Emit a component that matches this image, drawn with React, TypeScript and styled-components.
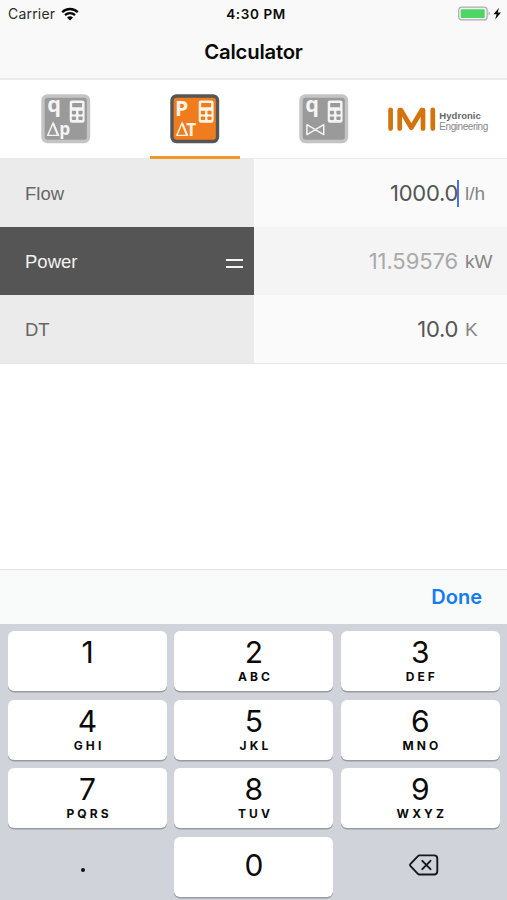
import React from "react";
import styled, { createGlobalStyle } from "styled-components";

const GlobalStyle = createGlobalStyle`
  * { box-sizing: border-box; }
  body { margin: 0; background: #fff; }
`;

const Screen = styled.div`
  width: 507px;
  height: 900px;
  display: flex;
  flex-direction: column;
  overflow: hidden;
  background: #fff;
  font-family: Inter, "Liberation Sans", sans-serif;
  color: #0a0a0a;
`;

const Header = styled.header`
  height: 80px;
  background: #f9f9f9;
  border-bottom: 2px solid #ebebeb;
`;

const StatusBar = styled.div`
  height: 27px;
  display: grid;
  grid-template-columns: 1fr auto 1fr;
  align-items: center;
  padding: 0 5px 0 8px;
`;

const Carrier = styled.span`
  display: flex;
  align-items: center;
  gap: 6px;
  font-size: 14px;
  letter-spacing: 0.2px;
  color: #2b2b2b;
`;

const Clock = styled.span`
  font-size: 13.5px;
  font-weight: 600;
  letter-spacing: 0.6px;
  padding-left: 2px;
`;

const Battery = styled.span`
  display: flex;
  justify-content: flex-end;
  align-items: center;
`;

const Title = styled.h1`
  margin: 0;
  height: 50px;
  line-height: 50px;
  text-align: center;
  font-size: 20.3px;
  font-weight: 600;
  letter-spacing: -0.2px;
`;

const Tabs = styled.nav`
  height: 79px;
  display: flex;
  border-bottom: 1px solid #ebebeb;
`;

const Tab = styled.div<{ $active?: boolean }>`
  width: 90px;
  height: 79px;
  margin: 0 19.5px;
  padding: 14px 0 0 20px;
  border-bottom: 3px solid ${(p) => (p.$active ? "#ef9a28" : "transparent")};
`;

const TabSet = styled.div`
  display: flex;
  width: 388px;
  padding-left: 1px;
`;

const Logo = styled.svg`
  margin-top: 26px;
`;

const Row = styled.div<{ $result?: boolean }>`
  height: 68px;
  display: grid;
  grid-template-columns: 254px 1fr;
  color: ${(p) => (p.$result ? "#a9a9a9" : "#555")};
  background: ${(p) => (p.$result ? "#f4f4f4" : "#fafafa")};
`;

const RowLabel = styled.div<{ $result?: boolean }>`
  display: flex;
  align-items: center;
  justify-content: space-between;
  padding: 1px 11px 0 25px;
  font-family: "Liberation Sans", Arial, sans-serif;
  font-size: 18.5px;
  color: ${(p) => (p.$result ? "#f2f2f2" : "#666")};
  background: ${(p) => (p.$result ? "#555" : "#ebebeb")};
`;

const EqualSign = styled.span`
  width: 17px;
  height: 9px;
  margin-top: 4px;
  border: solid #f4f4f4;
  border-width: 2px 0;
`;

const RowValue = styled.div`
  display: grid;
  grid-template-columns: 204px 1fr;
  align-items: center;
  column-gap: 7px;
`;

const Amount = styled.span<{ $spacing: number }>`
  position: relative;
  font-size: 22px;
  text-align: right;
  letter-spacing: ${(p) => p.$spacing}px;
`;

const Caret = styled.i`
  position: absolute;
  right: -1px;
  top: 0;
  width: 2px;
  height: 27px;
  background: #4c70e8;
`;

const Unit = styled.span`
  padding-top: 2px;
  font-family: "Liberation Sans", Arial, sans-serif;
  font-size: 19px;
  color: #858585;
`;

const Blank = styled.div`
  flex: 1;
  border-top: 1px solid #e4e4e4;
`;

const Accessory = styled.div`
  height: 55px;
  display: flex;
  justify-content: flex-end;
  align-items: center;
  padding-right: 25px;
  background: #f9fafa;
  border-top: 1px solid #e2e2e2;
`;

const Done = styled.button`
  padding: 0;
  border: 0;
  background: none;
  color: #147bf3;
  font: 600 20px Inter, sans-serif;
  letter-spacing: 0;
`;

const Keypad = styled.div`
  height: 276px;
  display: grid;
  grid-template-columns: repeat(3, 159px);
  grid-auto-rows: 60px;
  gap: 8.5px 7.4px;
  padding: 7px 7px 0 8px;
  background: #d0d3da;
`;

const Key = styled.button<{ $plain?: boolean; $center?: boolean }>`
  display: flex;
  flex-direction: column;
  align-items: center;
  justify-content: ${(p) => (p.$center ? "center" : "flex-start")};
  padding: ${(p) => (p.$center ? "0 0 2px" : "4px 0 0")};
  border: 0;
  border-radius: 6px;
  color: #0a0a0a;
  font-family: Inter, sans-serif;
  background: ${(p) => (p.$plain ? "transparent" : "#fff")};
  box-shadow: ${(p) => (p.$plain ? "none" : "0 1.5px 0 #989ba2")};
`;

const Digit = styled.span`
  height: 35px;
  font-size: 30px;
  line-height: 35px;
`;

const Letters = styled.span`
  height: 14px;
  margin-right: -3.1px;
  font-size: 12px;
  line-height: 14px;
  font-weight: 700;
  letter-spacing: 3.1px;
`;

const Point = styled.i`
  width: 4px;
  height: 4px;
  margin: 9px 9px 0 0;
  border-radius: 50%;
  background: #111;
`;

const BackspaceIcon = styled.svg`
  margin: 0 0 2px 7px;
`;

type ModeProps = { letter: string; lower: "Δp" | "ΔT" | "valve"; active?: boolean };

function ModeIcon({ letter, lower, active }: ModeProps) {
  const edge = active ? "#555" : "#c4c4c4";
  const fill = active ? "#ef7c1e" : "#9a9a9a";
  const ink = active ? "#fff3e4" : "#f4f4f4";
  return (
    <svg width="49.5" height="49.5" viewBox="0 0 50 50" overflow="visible">
      <rect x="2" y="2" width="46" height="46" rx="4.5" fill={fill} stroke={edge} strokeWidth="3.4" />
      <text
        x={active ? 5 : 6.2}
        y={active ? 22 : 18}
        fontFamily="Open Sans"
        fontWeight="700"
        fontSize={active ? 21.5 : 22}
        fill={ink}
      >
        {letter}
      </text>
      <rect x="29" y="6.5" width="15" height="22.5" rx="2.2" fill={ink} />
      <rect x="31.5" y="9" width="10" height="4.5" rx="0.6" fill={fill} />
      <g fill={fill}>
        <rect x="31.2" y="17" width="4.2" height="3.6" rx="0.8" />
        <rect x="37.8" y="17" width="4.2" height="3.6" rx="0.8" />
        <rect x="31.2" y="22.7" width="4.2" height="3.6" rx="0.8" />
        <rect x="37.8" y="22.7" width="4.2" height="3.6" rx="0.8" />
      </g>
      {lower === "valve" ? (
        <path d="M8 31 L25 41 V31 L8 41 Z" fill="none" stroke={ink} strokeWidth="1.5" strokeLinejoin="round" />
      ) : (
        <>
          <path d="M6.8 41.8 L12.2 29.3 L17.6 41.8 Z" fill="none" stroke={ink} strokeWidth="1.4" />
          <path d="M12.4 30 L17 41.2" stroke={ink} strokeWidth="2" />
          <text
            x={active ? 16.5 : 18.5}
            y={active ? 42.3 : 41.5}
            fontFamily="Open Sans"
            fontWeight="700"
            fontSize="17.5"
            fill={ink}
          >
            {lower[1]}
          </text>
        </>
      )}
    </svg>
  );
}

function BrandLogo() {
  return (
    <Logo width="104" height="34" viewBox="0 0 104 34">
      <path
        d="M2.6 3.8 V22.6 M11.7 22.6 V4.2 L13 4.2 L23.3 21.8 L33.8 4.2 L35 4.2 V22.6 M44.8 3.8 V22.6"
        fill="none"
        stroke="#d3730c"
        strokeWidth="4.7"
        strokeLinecap="round"
        strokeLinejoin="round"
      />
      <text x="51.3" y="13" fontFamily="Liberation Sans" fontWeight="700" fontSize="9.5" textLength="41.5" fill="#666">
        Hydronic
      </text>
      <text x="51.3" y="23.7" fontFamily="Liberation Sans" fontSize="10" textLength="49" fill="#888">
        Engineering
      </text>
    </Logo>
  );
}

const keys = [
  ["1", ""], ["2", "ABC"], ["3", "DEF"],
  ["4", "GHI"], ["5", "JKL"], ["6", "MNO"],
  ["7", "PQRS"], ["8", "TUV"], ["9", "WXYZ"],
];

export default function App() {
  return (
    <Screen>
      <GlobalStyle />
      <Header>
        <StatusBar>
          <Carrier>
            Carrier
            <svg width="18" height="14" viewBox="0 0 18 14">
              <g fill="none" stroke="#050505" strokeWidth="2.3">
                <path d="M1.2 5.2 C5.4 0.9 12.6 0.9 16.8 5.2" />
                <path d="M4 8.2 C6.8 5.5 11.2 5.5 14 8.2" />
              </g>
              <path d="M6 10.4 Q9 8 12 10.4 L9 13.4 Z" fill="#050505" />
            </svg>
          </Carrier>
          <Clock>4:30 PM</Clock>
          <Battery>
            <svg width="44" height="16" viewBox="0 0 44 16">
              <rect x="0.7" y="1.1" width="28.4" height="12.8" rx="3" fill="#f4f4f4" stroke="#acacac" strokeWidth="1.2" />
              <rect x="2.7" y="3.2" width="24" height="8.7" rx="1" fill="#4cd663" />
              <path d="M30.6 5.3 Q33.4 7.5 30.6 9.7 Z" fill="#acacac" />
              <path d="M41 1.8 L35.5 8.3 H38.6 L37.1 13.4 L43 6.6 H39.7 Z" fill="#080808" />
            </svg>
          </Battery>
        </StatusBar>
        <Title>Calculator</Title>
      </Header>
      <Tabs>
        <TabSet>
          <Tab><ModeIcon letter="q" lower="Δp" /></Tab>
          <Tab $active><ModeIcon letter="P" lower="ΔT" active /></Tab>
          <Tab><ModeIcon letter="q" lower="valve" /></Tab>
        </TabSet>
        <BrandLogo />
      </Tabs>
      <Row>
        <RowLabel>Flow</RowLabel>
        <RowValue>
          <Amount $spacing={-0.3}>1000.0<Caret /></Amount>
          <Unit>l/h</Unit>
        </RowValue>
      </Row>
      <Row $result>
        <RowLabel $result>Power<EqualSign /></RowLabel>
        <RowValue>
          <Amount $spacing={-0.1}>11.59576</Amount>
          <Unit>kW</Unit>
        </RowValue>
      </Row>
      <Row>
        <RowLabel>DT</RowLabel>
        <RowValue>
          <Amount $spacing={-0.3}>10.0</Amount>
          <Unit>K</Unit>
        </RowValue>
      </Row>
      <Blank />
      <Accessory><Done>Done</Done></Accessory>
      <Keypad>
        {keys.map(([digit, letters]) => (
          <Key key={digit}>
            <Digit>{digit}</Digit>
            <Letters>{letters}</Letters>
          </Key>
        ))}
        <Key $plain $center><Point /></Key>
        <Key $center><Digit>0</Digit></Key>
        <Key $plain $center>
          <BackspaceIcon width="30" height="22" viewBox="0 0 30 22" fill="none" stroke="#15171a" strokeWidth="1.9" strokeLinejoin="round">
            <path d="M10.5 1.4 H25 Q28.3 1.4 28.3 4.6 V17.3 Q28.3 20.5 25 20.5 H10.5 Q9.5 20.5 8.7 19.6 L1.3 11.8 Q0.7 11 1.3 10.2 L8.7 2.3 Q9.5 1.4 10.5 1.4 Z" />
            <path d="M13.3 6.8 L21.5 15.2 M21.5 6.8 L13.3 15.2" strokeLinecap="round" />
          </BackspaceIcon>
        </Key>
      </Keypad>
    </Screen>
  );
}
